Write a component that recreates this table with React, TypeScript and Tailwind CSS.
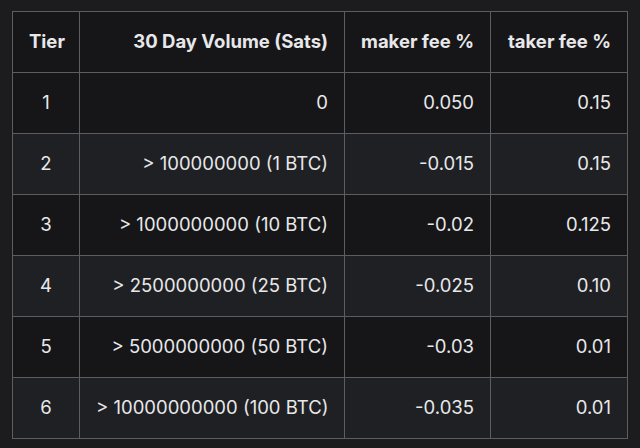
import React from "react";

const rows = [
  { tier: "1", volume: "0", maker: "0.050", taker: "0.15" },
  { tier: "2", volume: "> 100000000 (1 BTC)", maker: "-0.015", taker: "0.15" },
  { tier: "3", volume: "> 1000000000 (10 BTC)", maker: "-0.02", taker: "0.125" },
  { tier: "4", volume: "> 2500000000 (25 BTC)", maker: "-0.025", taker: "0.10" },
  { tier: "5", volume: "> 5000000000 (50 BTC)", maker: "-0.03", taker: "0.01" },
  { tier: "6", volume: "> 10000000000 (100 BTC)", maker: "-0.035", taker: "0.01" },
];

const cell = "border border-[#5c5d61] px-[16px] h-[61px] p-0 whitespace-nowrap";

const App = () => {
  return (
    <div
      className="w-[640px] h-[448px] bg-[#1c1c1f] pt-[11px] pl-[12px] text-[#e8e8ea] text-[18.5px]"
      style={{ fontFamily: "Inter, 'Noto Sans', sans-serif" }}
    >
      <table className="border-collapse table-fixed w-[615px]">
        <colgroup>
          <col className="w-[67px]" />
          <col className="w-[265px]" />
          <col className="w-[146px]" />
          <col className="w-[137px]" />
        </colgroup>
        <thead>
          <tr className="bg-[#161618] font-semibold">
            <th className={`${cell} h-[60px] text-center`}>Tier</th>
            <th className={`${cell} h-[60px] text-right`}>30 Day Volume (Sats)</th>
            <th className={`${cell} h-[60px] text-right`}>maker fee %</th>
            <th className={`${cell} h-[60px] text-right`}>taker fee %</th>
          </tr>
        </thead>
        <tbody>
          {rows.map((r, i) => (
            <tr key={r.tier} className={i % 2 === 0 ? "bg-[#161618]" : "bg-[#1f2023]"}>
              <td className={`${cell} text-center`}>{r.tier}</td>
              <td className={`${cell} text-right`}>{r.volume}</td>
              <td className={`${cell} text-right`}>{r.maker}</td>
              <td className={`${cell} text-right`}>{r.taker}</td>
            </tr>
          ))}
        </tbody>
      </table>
    </div>
  );
};

export default App;
